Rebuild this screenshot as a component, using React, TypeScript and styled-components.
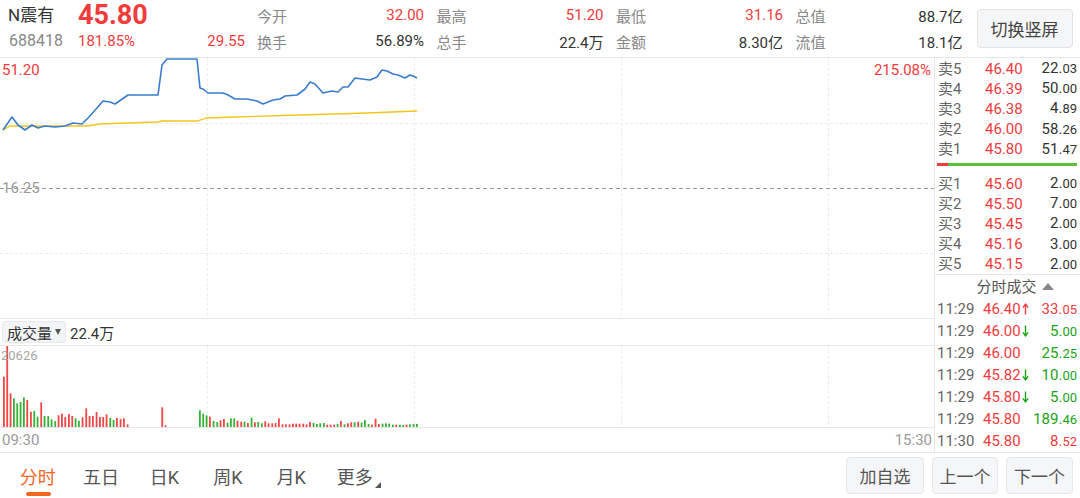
import React from 'react';
import styled, { createGlobalStyle } from 'styled-components';

const RED = '#f23b3b';
const GREEN = '#19a319';
const BAR_RED = '#f04646';
const BAR_GREEN = '#36b236';
const TEXT = '#333';
const SUB = '#888';
const LINE = '#e6e6e6';
const GRID = '#ececec';
const ORANGE = '#f2661f';

const GlobalStyle = createGlobalStyle`
  html, body { margin: 0; padding: 0; background: #fff; }
  body { font-family: Roboto, "Noto Sans CJK SC", sans-serif; }
  * { box-sizing: border-box; }
`;

const Page = styled.div`
  width: 1080px;
  height: 498px;
  display: flex;
  flex-direction: column;
  overflow: hidden;
  background: #fff;
  color: ${TEXT};
`;

/* ---------- header ---------- */
const Header = styled.header`
  display: flex;
  height: 58px;
  padding: 2px 0 0 8px;
  border-bottom: 1px solid ${LINE};
  flex-shrink: 0;
`;
const NameCol = styled.div`
  width: 70px;
  display: flex;
  flex-direction: column;
`;
const StockName = styled.div`
  height: 26px;
  line-height: 26px;
  font-size: 17px;
  color: ${TEXT};
  white-space: nowrap;
`;
const StockCode = styled.div`
  height: 26px;
  line-height: 26px;
  font-size: 16px;
  padding-left: 1px;
  color: ${SUB};
`;
const PriceCol = styled.div`
  width: 167px;
  display: flex;
  flex-direction: column;
`;
const LastPrice = styled.div`
  height: 26px;
  line-height: 26px;
  font-size: 27px;
  font-weight: 700;
  color: ${RED};
`;
const ChangeRow = styled.div`
  height: 26px;
  line-height: 26px;
  font-size: 15px;
  color: ${RED};
  display: flex;
  justify-content: space-between;
`;
const StatsGrid = styled.div`
  margin-left: 12px;
  display: grid;
  grid-template-columns: repeat(4, 167px);
  grid-auto-rows: 26px;
  column-gap: 12.5px;
`;
const Stat = styled.div`
  display: flex;
  justify-content: space-between;
  align-items: center;
  font-size: 15px;
  white-space: nowrap;
`;
const StatLabel = styled.span`
  color: ${SUB};
`;
const StatValue = styled.span<{ $red?: boolean }>`
  color: ${(p) => (p.$red ? RED : TEXT)};
`;
const SwitchButton = styled.div`
  margin: 7px 0 0 14px;
  width: 96px;
  height: 39px;
  display: flex;
  align-items: center;
  justify-content: center;
  font-size: 17px;
  color: #444;
  background: #f5f6f8;
  border: 1px solid #e3e3e3;
  border-radius: 4px;
`;

/* ---------- main ---------- */
const Main = styled.div`
  display: flex;
  height: 394px;
  flex-shrink: 0;
`;
const LeftPane = styled.div`
  width: 935px;
  border-right: 1px solid ${LINE};
  display: flex;
  flex-direction: column;
`;
const ChartBox = styled.div<{ $h: number }>`
  position: relative;
  height: ${(p) => p.$h}px;
  border-bottom: 1px solid ${LINE};
  flex-shrink: 0;
`;
const ChartSvg = styled.svg`
  display: block;
`;
const AxisLabel = styled.span<{ $color: string; $size?: number }>`
  position: absolute;
  font-size: ${(p) => p.$size ?? 15}px;
  line-height: 18px;
  color: ${(p) => p.$color};
  white-space: nowrap;
`;
const VolHeader = styled.div`
  height: 27px;
  border-bottom: 1px solid ${LINE};
  display: flex;
  align-items: center;
  padding-left: 2px;
  font-size: 15px;
  flex-shrink: 0;
`;
const VolChip = styled.div`
  height: 22px;
  display: flex;
  align-items: center;
  gap: 3px;
  padding: 0 4px 0 4px;
  background: #f3f4f6;
  border: 1px solid #e8e9ec;
  border-radius: 3px;
  color: ${TEXT};
`;
const DownTri = styled.span`
  width: 0;
  height: 0;
  border-left: 3.5px solid transparent;
  border-right: 3.5px solid transparent;
  border-top: 6px solid #555;
`;
const VolTotal = styled.span`
  margin-left: 4px;
  color: ${TEXT};
`;
const TimeAxis = styled.div`
  height: 24px;
  display: flex;
  align-items: center;
  justify-content: space-between;
  padding: 0 2px;
  font-size: 15px;
  color: #9a9a9a;
`;

/* ---------- right panel ---------- */
const RightPane = styled.div`
  width: 145px;
  display: flex;
  flex-direction: column;
`;
const BookBlock = styled.div<{ $h: number; $pt: number; $pb: number; $border?: boolean }>`
  height: ${(p) => p.$h}px;
  padding-top: ${(p) => p.$pt}px;
  padding-bottom: ${(p) => p.$pb}px;
  border-bottom: ${(p) => (p.$border ? `1px solid ${LINE}` : 'none')};
  display: flex;
  flex-direction: column;
  flex-shrink: 0;
`;
const BookRow = styled.div`
  flex: 1 1 0;
  min-height: 0;
  display: grid;
  grid-template-columns: 47px 1fr auto;
  align-items: center;
  padding: 0 3px;
  font-size: 15px;
  line-height: 20px;
  white-space: nowrap;
`;
const BookLabel = styled.span`
  color: #666;
`;
const RedPrice = styled.span`
  color: ${RED};
  display: inline-flex;
  align-items: center;
`;
const Qty = styled.span<{ $color: string }>`
  color: ${(p) => p.$color};
  text-align: right;
`;
const Dec = styled.span`
  font-size: 13px;
`;
const SpreadBar = styled.div`
  height: 3px;
  margin: 0 3px 0 2px;
  display: flex;
  flex-shrink: 0;
`;
const SpreadPart = styled.div<{ $color: string; $w?: number }>`
  background: ${(p) => p.$color};
  ${(p) => (p.$w ? `width: ${p.$w}px;` : 'flex: 1;')}
`;
const TradesHeader = styled.div`
  height: 23px;
  display: flex;
  align-items: center;
  justify-content: center;
  padding-left: 15px;
  gap: 5px;
  font-size: 15px;
  line-height: 20px;
  color: #555;
  flex-shrink: 0;
`;
const UpTri = styled.span`
  width: 0;
  height: 0;
  border-left: 6px solid transparent;
  border-right: 6px solid transparent;
  border-bottom: 7px solid #888;
`;
const TradeList = styled.div`
  height: 154px;
  display: flex;
  flex-direction: column;
`;
const TradeRow = styled.div`
  flex: 1 1 0;
  min-height: 0;
  display: grid;
  grid-template-columns: 46px 1fr auto;
  align-items: center;
  padding: 0 3px 0 2px;
  font-size: 15px;
  line-height: 20px;
  white-space: nowrap;
`;
const TradeTime = styled.span`
  color: #666;
`;
const ArrowSvg = styled.svg`
  margin-left: 1px;
`;

/* ---------- bottom bar ---------- */
const BottomBar = styled.footer`
  height: 46px;
  border-top: 1px solid ${LINE};
  display: flex;
  align-items: center;
  justify-content: space-between;
  flex-shrink: 0;
`;
const Tabs = styled.nav`
  display: flex;
  padding-left: 6px;
  height: 100%;
`;
const Tab = styled.div<{ $active?: boolean; $more?: boolean }>`
  position: relative;
  width: 63.4px;
  height: 100%;
  display: flex;
  align-items: center;
  justify-content: center;
  font-size: 18px;
  color: ${(p) => (p.$active ? ORANGE : '#555')};
  ${(p) =>
    p.$active
      ? `&::after {
    content: '';
    position: absolute;
    left: 20px;
    bottom: 2px;
    width: 25px;
    height: 4px;
    border-radius: 2px;
    background: ${ORANGE};
  }`
      : ''}
  ${(p) =>
    p.$more
      ? `&::after {
    content: '';
    position: absolute;
    right: 5px;
    bottom: 10px;
    width: 0;
    height: 0;
    border-left: 6px solid transparent;
    border-bottom: 6px solid #555;
  }`
      : ''}
`;
const Actions = styled.div`
  display: flex;
  gap: 8px;
  padding-right: 7px;
`;
const ActionButton = styled.div<{ $w: number }>`
  width: ${(p) => p.$w}px;
  height: 37px;
  display: flex;
  align-items: center;
  justify-content: center;
  font-size: 17px;
  color: #555;
  background: #f5f6f8;
  border: 1px solid #e6e7ea;
  border-radius: 4px;
`;

/* ---------- data ---------- */
const STATS = [
  { label: '今开', value: '32.00', red: true },
  { label: '最高', value: '51.20', red: true },
  { label: '最低', value: '31.16', red: true },
  { label: '总值', value: '88.7亿' },
  { label: '换手', value: '56.89%' },
  { label: '总手', value: '22.4万' },
  { label: '金额', value: '8.30亿' },
  { label: '流值', value: '18.1亿' },
];

const SELLS = [
  ['卖5', '46.40', '22.03'],
  ['卖4', '46.39', '50.00'],
  ['卖3', '46.38', '4.89'],
  ['卖2', '46.00', '58.26'],
  ['卖1', '45.80', '51.47'],
];
const BUYS = [
  ['买1', '45.60', '2.00'],
  ['买2', '45.50', '7.00'],
  ['买3', '45.45', '2.00'],
  ['买4', '45.16', '3.00'],
  ['买5', '45.15', '2.00'],
];
type Dir = 'up' | 'down' | null;
const TRADES: [string, string, Dir, string, string][] = [
  ['11:29', '46.40', 'up', '33.05', RED],
  ['11:29', '46.00', 'down', '5.00', GREEN],
  ['11:29', '46.00', null, '25.25', GREEN],
  ['11:29', '45.82', 'down', '10.00', GREEN],
  ['11:29', '45.80', 'down', '5.00', GREEN],
  ['11:29', '45.80', null, '189.46', GREEN],
  ['11:30', '45.80', null, '8.52', RED],
];

const BLUE_PTS = [[3,130],[12,117],[18,125],[25,130],[32,125],[38,128],[45,126],[55,127],[65,126],[73,123],[82,124],[88,118],[97,108],[103,101],[110,102],[115,104],[118,102],[128,95],[158,95],[162,65],[167,59],[197,59],[200,88],[203,89],[208,93],[223,93],[228,95],[235,99],[247,99],[257,101],[263,104],[273,100],[280,99],[285,96],[297,95],[305,89],[310,82],[315,84],[323,93],[332,91],[338,92],[343,87],[348,87],[355,78],[362,79],[370,80],[377,77],[382,70],[387,71],[393,74],[398,75],[405,78],[410,75],[413,76],[417,78]];
const AVG_PTS = [[3,130],[10,126],[87,126],[100,124],[127,123],[158,122],[162,121],[197,121],[207,118],[233,117],[300,115],[367,113],[417,111]];

const VOL: [number, number, 'r' | 'g'][] = [[12,200,'r'],[22,107,'r'],[32,250,'r'],[42,265,'g'],[52,280,'g'],[62,276,'g'],[72,262,'g'],[82,270,'r'],[93,305,'r'],[103,303,'g'],[113,320,'g'],[124,277,'r'],[134,318,'g'],[145,318,'g'],[155,328,'g'],[166,333,'g'],[176,316,'r'],[186,311,'r'],[196,321,'r'],[207,312,'r'],[217,318,'r'],[227,325,'g'],[237,332,'g'],[248,322,'r'],[259,295,'r'],[269,318,'r'],[279,318,'r'],[290,306,'r'],[300,321,'r'],[310,321,'r'],[320,313,'r'],[331,324,'g'],[341,330,'g'],[351,324,'r'],[362,327,'r'],[372,325,'r'],[383,343,'r'],[487,292,'r'],[497,346,'r'],[600,301,'g'],[610,311,'g'],[620,316,'g'],[630,320,'r'],[641,333,'g'],[652,336,'g'],[662,331,'r'],[672,327,'r'],[683,338,'g'],[693,325,'g'],[703,325,'g'],[713,332,'r'],[724,335,'r'],[734,335,'g'],[744,339,'r'],[755,323,'g'],[765,337,'r'],[775,336,'g'],[786,340,'g'],[796,334,'r'],[806,340,'r'],[817,340,'r'],[827,339,'r'],[837,325,'r'],[848,343,'r'],[858,343,'r'],[869,343,'r'],[879,341,'r'],[889,341,'r'],[899,341,'r'],[910,341,'r'],[920,343,'r'],[930,336,'r'],[941,339,'g'],[951,342,'g'],[961,340,'g'],[972,339,'g'],[982,344,'r'],[992,344,'r'],[1003,344,'r'],[1013,342,'g'],[1023,333,'r'],[1034,343,'g'],[1044,340,'r'],[1054,337,'r'],[1064,337,'g'],[1075,335,'r'],[1085,338,'g'],[1095,330,'g'],[1106,342,'g'],[1116,344,'r'],[1127,326,'r'],[1137,342,'r'],[1148,341,'g'],[1158,340,'g'],[1168,341,'g'],[1179,344,'g'],[1189,344,'r'],[1200,344,'g'],[1210,345,'g'],[1220,344,'r'],[1230,343,'g'],[1241,342,'g'],[1251,342,'g']];

const V_GRID = [207, 414, 621, 828];
const CHART_W = 934;

function Quantity({ value, color }: { value: string; color: string }) {
  const [i, d] = value.split('.');
  return (
    <Qty $color={color}>
      {i}.<Dec>{d}</Dec>
    </Qty>
  );
}

function Arrow({ dir }: { dir: Dir }) {
  if (!dir) return null;
  const c = dir === 'up' ? RED : GREEN;
  return (
    <ArrowSvg width="7" height="12" viewBox="0 0 7 12">
      {dir === 'up' ? (
        <>
          <path d="M3.5 1.5 V11.5" stroke={c} strokeWidth="1.4" />
          <path d="M0.8 4.6 L3.5 1.2 L6.2 4.6" stroke={c} strokeWidth="1.4" fill="none" />
        </>
      ) : (
        <>
          <path d="M3.5 0.5 V10.5" stroke={c} strokeWidth="1.4" />
          <path d="M0.8 7.4 L3.5 10.8 L6.2 7.4" stroke={c} strokeWidth="1.4" fill="none" />
        </>
      )}
    </ArrowSvg>
  );
}

function PriceChart() {
  const pts = (a: number[][]) => a.map(([x, y]) => `${x},${y - 58}`).join(' ');
  return (
    <ChartBox $h={261}>
      <ChartSvg width={CHART_W} height={260}>
        {[65, 195].map((y) => (
          <line key={y} x1={0} x2={CHART_W} y1={y + 0.5} y2={y + 0.5} stroke={GRID} strokeDasharray="3 2" />
        ))}
        {V_GRID.map((x) => (
          <line key={x} x1={x + 0.5} x2={x + 0.5} y1={0} y2={260} stroke={GRID} strokeDasharray="3 2" />
        ))}
        <line x1={0} x2={CHART_W} y1={130.5} y2={130.5} stroke="#9a9a9a" strokeDasharray="4 3" />
        <polyline points={pts(AVG_PTS)} fill="none" stroke="#f5c518" strokeWidth="1.3" />
        <polyline points={pts(BLUE_PTS)} fill="none" stroke="#3a7ccf" strokeWidth="1.6" strokeLinejoin="round" />
      </ChartSvg>
      <AxisLabel $color={RED} style={{ left: 2, top: 3 }}>51.20</AxisLabel>
      <AxisLabel $color={RED} style={{ right: 3, top: 3 }}>215.08%</AxisLabel>
      <AxisLabel $color="#9a9a9a" style={{ left: 2, top: 121 }}>16.25</AxisLabel>
    </ChartBox>
  );
}

function VolumeChart() {
  return (
    <ChartBox $h={82}>
      <ChartSvg width={CHART_W} height={81}>
        {V_GRID.map((x) => (
          <line key={x} x1={x + 0.5} x2={x + 0.5} y1={0} y2={81} stroke={GRID} strokeDasharray="3 2" />
        ))}
        {VOL.map(([zx, zy, c], i) => {
          const h = Math.min(81, Math.max(1.5, 117 - zy / 3));
          return (
            <rect key={i} x={zx / 3 - 1} y={81 - h} width={1.8} height={h} fill={c === 'r' ? BAR_RED : BAR_GREEN} />
          );
        })}
      </ChartSvg>
      <AxisLabel $color="#a6a6a6" $size={13} style={{ left: 1, top: 1 }}>20626</AxisLabel>
    </ChartBox>
  );
}

export default function App() {
  return (
    <Page>
      <GlobalStyle />
      <Header>
        <NameCol>
          <StockName>N震有</StockName>
          <StockCode>688418</StockCode>
        </NameCol>
        <PriceCol>
          <LastPrice>45.80</LastPrice>
          <ChangeRow>
            <span>181.85%</span>
            <span>29.55</span>
          </ChangeRow>
        </PriceCol>
        <StatsGrid>
          {STATS.map((s) => (
            <Stat key={s.label}>
              <StatLabel>{s.label}</StatLabel>
              <StatValue $red={s.red}>{s.value}</StatValue>
            </Stat>
          ))}
        </StatsGrid>
        <SwitchButton>切换竖屏</SwitchButton>
      </Header>

      <Main>
        <LeftPane>
          <PriceChart />
          <VolHeader>
            <VolChip>
              成交量
              <DownTri />
            </VolChip>
            <VolTotal>22.4万</VolTotal>
          </VolHeader>
          <VolumeChart />
          <TimeAxis>
            <span>09:30</span>
            <span>15:30</span>
          </TimeAxis>
        </LeftPane>

        <RightPane>
          <BookBlock $h={105} $pt={0} $pb={4}>
            {SELLS.map(([l, p, q]) => (
              <BookRow key={l}>
                <BookLabel>{l}</BookLabel>
                <RedPrice>{p}</RedPrice>
                <Quantity value={q} color={TEXT} />
              </BookRow>
            ))}
          </BookBlock>
          <SpreadBar>
            <SpreadPart $color={RED} $w={11} />
            <SpreadPart $color="#5cbf3a" />
          </SpreadBar>
          <BookBlock $h={109} $pt={7} $pb={0} $border>
            {BUYS.map(([l, p, q]) => (
              <BookRow key={l}>
                <BookLabel>{l}</BookLabel>
                <RedPrice>{p}</RedPrice>
                <Quantity value={q} color={TEXT} />
              </BookRow>
            ))}
          </BookBlock>
          <TradesHeader>
            分时成交
            <UpTri />
          </TradesHeader>
          <TradeList>
            {TRADES.map(([t, p, d, q, c], i) => (
              <TradeRow key={i}>
                <TradeTime>{t}</TradeTime>
                <RedPrice>
                  {p}
                  <Arrow dir={d} />
                </RedPrice>
                <Quantity value={q} color={c} />
              </TradeRow>
            ))}
          </TradeList>
        </RightPane>
      </Main>

      <BottomBar>
        <Tabs>
          <Tab $active>分时</Tab>
          <Tab>五日</Tab>
          <Tab>日K</Tab>
          <Tab>周K</Tab>
          <Tab>月K</Tab>
          <Tab $more>更多</Tab>
        </Tabs>
        <Actions>
          <ActionButton $w={78}>加自选</ActionButton>
          <ActionButton $w={66}>上一个</ActionButton>
          <ActionButton $w={67}>下一个</ActionButton>
        </Actions>
      </BottomBar>
    </Page>
  );
}
